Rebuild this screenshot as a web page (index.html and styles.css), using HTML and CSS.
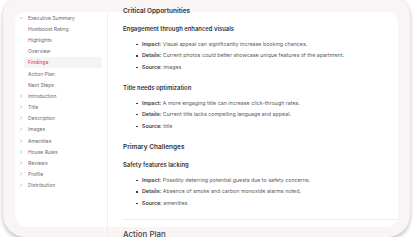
FILE: index.html
```html
<!DOCTYPE html>
<html lang="en">
<head>
    <meta charset="UTF-8">
    <meta name="viewport" content="width=device-width, initial-scale=1.0">
    <title>Report - Findings</title>
    <link rel="stylesheet" href="styles.css">
</head>
<body>
    <div class="frame">
        <div class="panel">
            <nav class="sidebar">
                <div class="nav-item"><svg class="chev" viewBox="0 0 6 6"><path d="M1.5 2.2 L3 3.8 L4.5 2.2"/></svg>Executive Summary</div>
                <div class="nav-sub">Hostboost Rating</div>
                <div class="nav-sub">Highlights</div>
                <div class="nav-sub">Overview</div>
                <div class="nav-sub active">Findings</div>
                <div class="nav-sub">Action Plan</div>
                <div class="nav-sub">Next Steps</div>
                <div class="nav-item"><svg class="chev" viewBox="0 0 6 6"><path d="M2.3 1.5 L3.8 3 L2.3 4.5"/></svg>Introduction</div>
                <div class="nav-item"><svg class="chev" viewBox="0 0 6 6"><path d="M2.3 1.5 L3.8 3 L2.3 4.5"/></svg>Title</div>
                <div class="nav-item"><svg class="chev" viewBox="0 0 6 6"><path d="M2.3 1.5 L3.8 3 L2.3 4.5"/></svg>Description</div>
                <div class="nav-item"><svg class="chev" viewBox="0 0 6 6"><path d="M2.3 1.5 L3.8 3 L2.3 4.5"/></svg>Images</div>
                <div class="nav-item"><svg class="chev" viewBox="0 0 6 6"><path d="M2.3 1.5 L3.8 3 L2.3 4.5"/></svg>Amenities</div>
                <div class="nav-item"><svg class="chev" viewBox="0 0 6 6"><path d="M2.3 1.5 L3.8 3 L2.3 4.5"/></svg>House Rules</div>
                <div class="nav-item"><svg class="chev" viewBox="0 0 6 6"><path d="M2.3 1.5 L3.8 3 L2.3 4.5"/></svg>Reviews</div>
                <div class="nav-item"><svg class="chev" viewBox="0 0 6 6"><path d="M2.3 1.5 L3.8 3 L2.3 4.5"/></svg>Profile</div>
                <div class="nav-item"><svg class="chev" viewBox="0 0 6 6"><path d="M2.3 1.5 L3.8 3 L2.3 4.5"/></svg>Distribution</div>
            </nav>
            <main class="content">
                <h2 class="section-title">Critical Opportunities</h2>

                <h3 class="finding-title">Engagement through enhanced visuals</h3>
                <ul class="finding-list">
                    <li><b>Impact:</b> Visual appeal can significantly increase booking chances.</li>
                    <li><b>Details:</b> Current photos could better showcase unique features of the apartment.</li>
                    <li><b>Source:</b> images</li>
                </ul>

                <h3 class="finding-title">Title needs optimization</h3>
                <ul class="finding-list">
                    <li><b>Impact:</b> A more engaging title can increase click-through rates.</li>
                    <li><b>Details:</b> Current title lacks compelling language and appeal.</li>
                    <li><b>Source:</b> title</li>
                </ul>

                <h2 class="section-title second">Primary Challenges</h2>

                <h3 class="finding-title">Safety features lacking</h3>
                <ul class="finding-list">
                    <li><b>Impact:</b> Possibly deterring potential guests due to safety concerns.</li>
                    <li><b>Details:</b> Absence of smoke and carbon monoxide alarms noted.</li>
                    <li><b>Source:</b> amenities</li>
                </ul>

                <hr class="divider">

                <h2 class="next-title">Action Plan</h2>
            </main>
        </div>
    </div>
</body>
</html>
```

FILE: styles.css
```css
:root {
    --frame-color: #f8f5f4;
    --panel-color: #ffffff;
    --heading-color: #333338;
    --text-color: #5a5b61;
    --accent-color: #e8405f;
    --line-color: #f0eeee;
}

* {
    margin: 0;
    padding: 0;
    box-sizing: border-box;
}

body {
    font-family: Inter, 'Liberation Sans', sans-serif;
    background-color: #ffffff;
    color: var(--text-color);
    overflow: hidden;
}

.frame {
    margin: -6px 5px 0 3px;
    height: 243px;
    padding: 18px 12px 0 12px;
    background-color: var(--frame-color);
    border-radius: 22px;
    box-shadow: 0 2px 4px rgba(0, 0, 0, 0.28);
}

.panel {
    height: 215px;
    background-color: var(--panel-color);
    border-radius: 11px;
    display: grid;
    grid-template-columns: 93px 1fr;
}

.sidebar {
    border-right: 1px solid var(--line-color);
    padding: 0 5px 0 0;
    font-size: 5px;
    color: #6a6b71;
}

.nav-item,
.nav-sub {
    height: 11.2px;
    display: flex;
    align-items: center;
    padding-left: 13px;
}

.nav-item .chev {
    width: 6px;
    height: 6px;
    margin-left: -10px;
    margin-right: 4px;
    fill: none;
    stroke: #a4a5aa;
    stroke-width: 0.6;
}

.nav-sub.active {
    margin: 0.35px 0 0.35px 9px;
    padding-left: 4px;
    height: 10.5px;
    background-color: #f4f4f5;
    border-radius: 3px;
    color: var(--accent-color);
    font-weight: 500;
}

.content {
    margin-top: -6px;
    padding: 0 1px 0 15px;
}

.section-title {
    font-size: 6.5px;
    font-weight: 600;
    line-height: 10px;
    color: var(--heading-color);
}

.section-title.second {
    margin-top: 10px;
}

.finding-title {
    font-size: 5.9px;
    font-weight: 600;
    line-height: 10px;
    color: var(--heading-color);
    margin-top: 8px;
    margin-bottom: 4.75px;
}

.finding-list + .finding-title {
    margin-top: 9.5px;
}

.finding-list {
    list-style: none;
    padding-left: 13px;
    font-size: 5.3px;
}

.finding-list li {
    line-height: 11.5px;
    position: relative;
    padding-left: 6px;
}

.finding-list li::before {
    content: "";
    position: absolute;
    left: 0;
    top: 5px;
    width: 2px;
    height: 1.4px;
    background-color: #3a3a3f;
}

.finding-list b {
    font-weight: 600;
    color: #3a3a3f;
}

.divider {
    border: none;
    border-top: 1px solid var(--line-color);
    margin: 9.75px 0 0 0;
}

.next-title {
    margin-top: 9px;
    font-size: 7.9px;
    font-weight: 500;
    line-height: 10px;
    color: #444449;
}
```
